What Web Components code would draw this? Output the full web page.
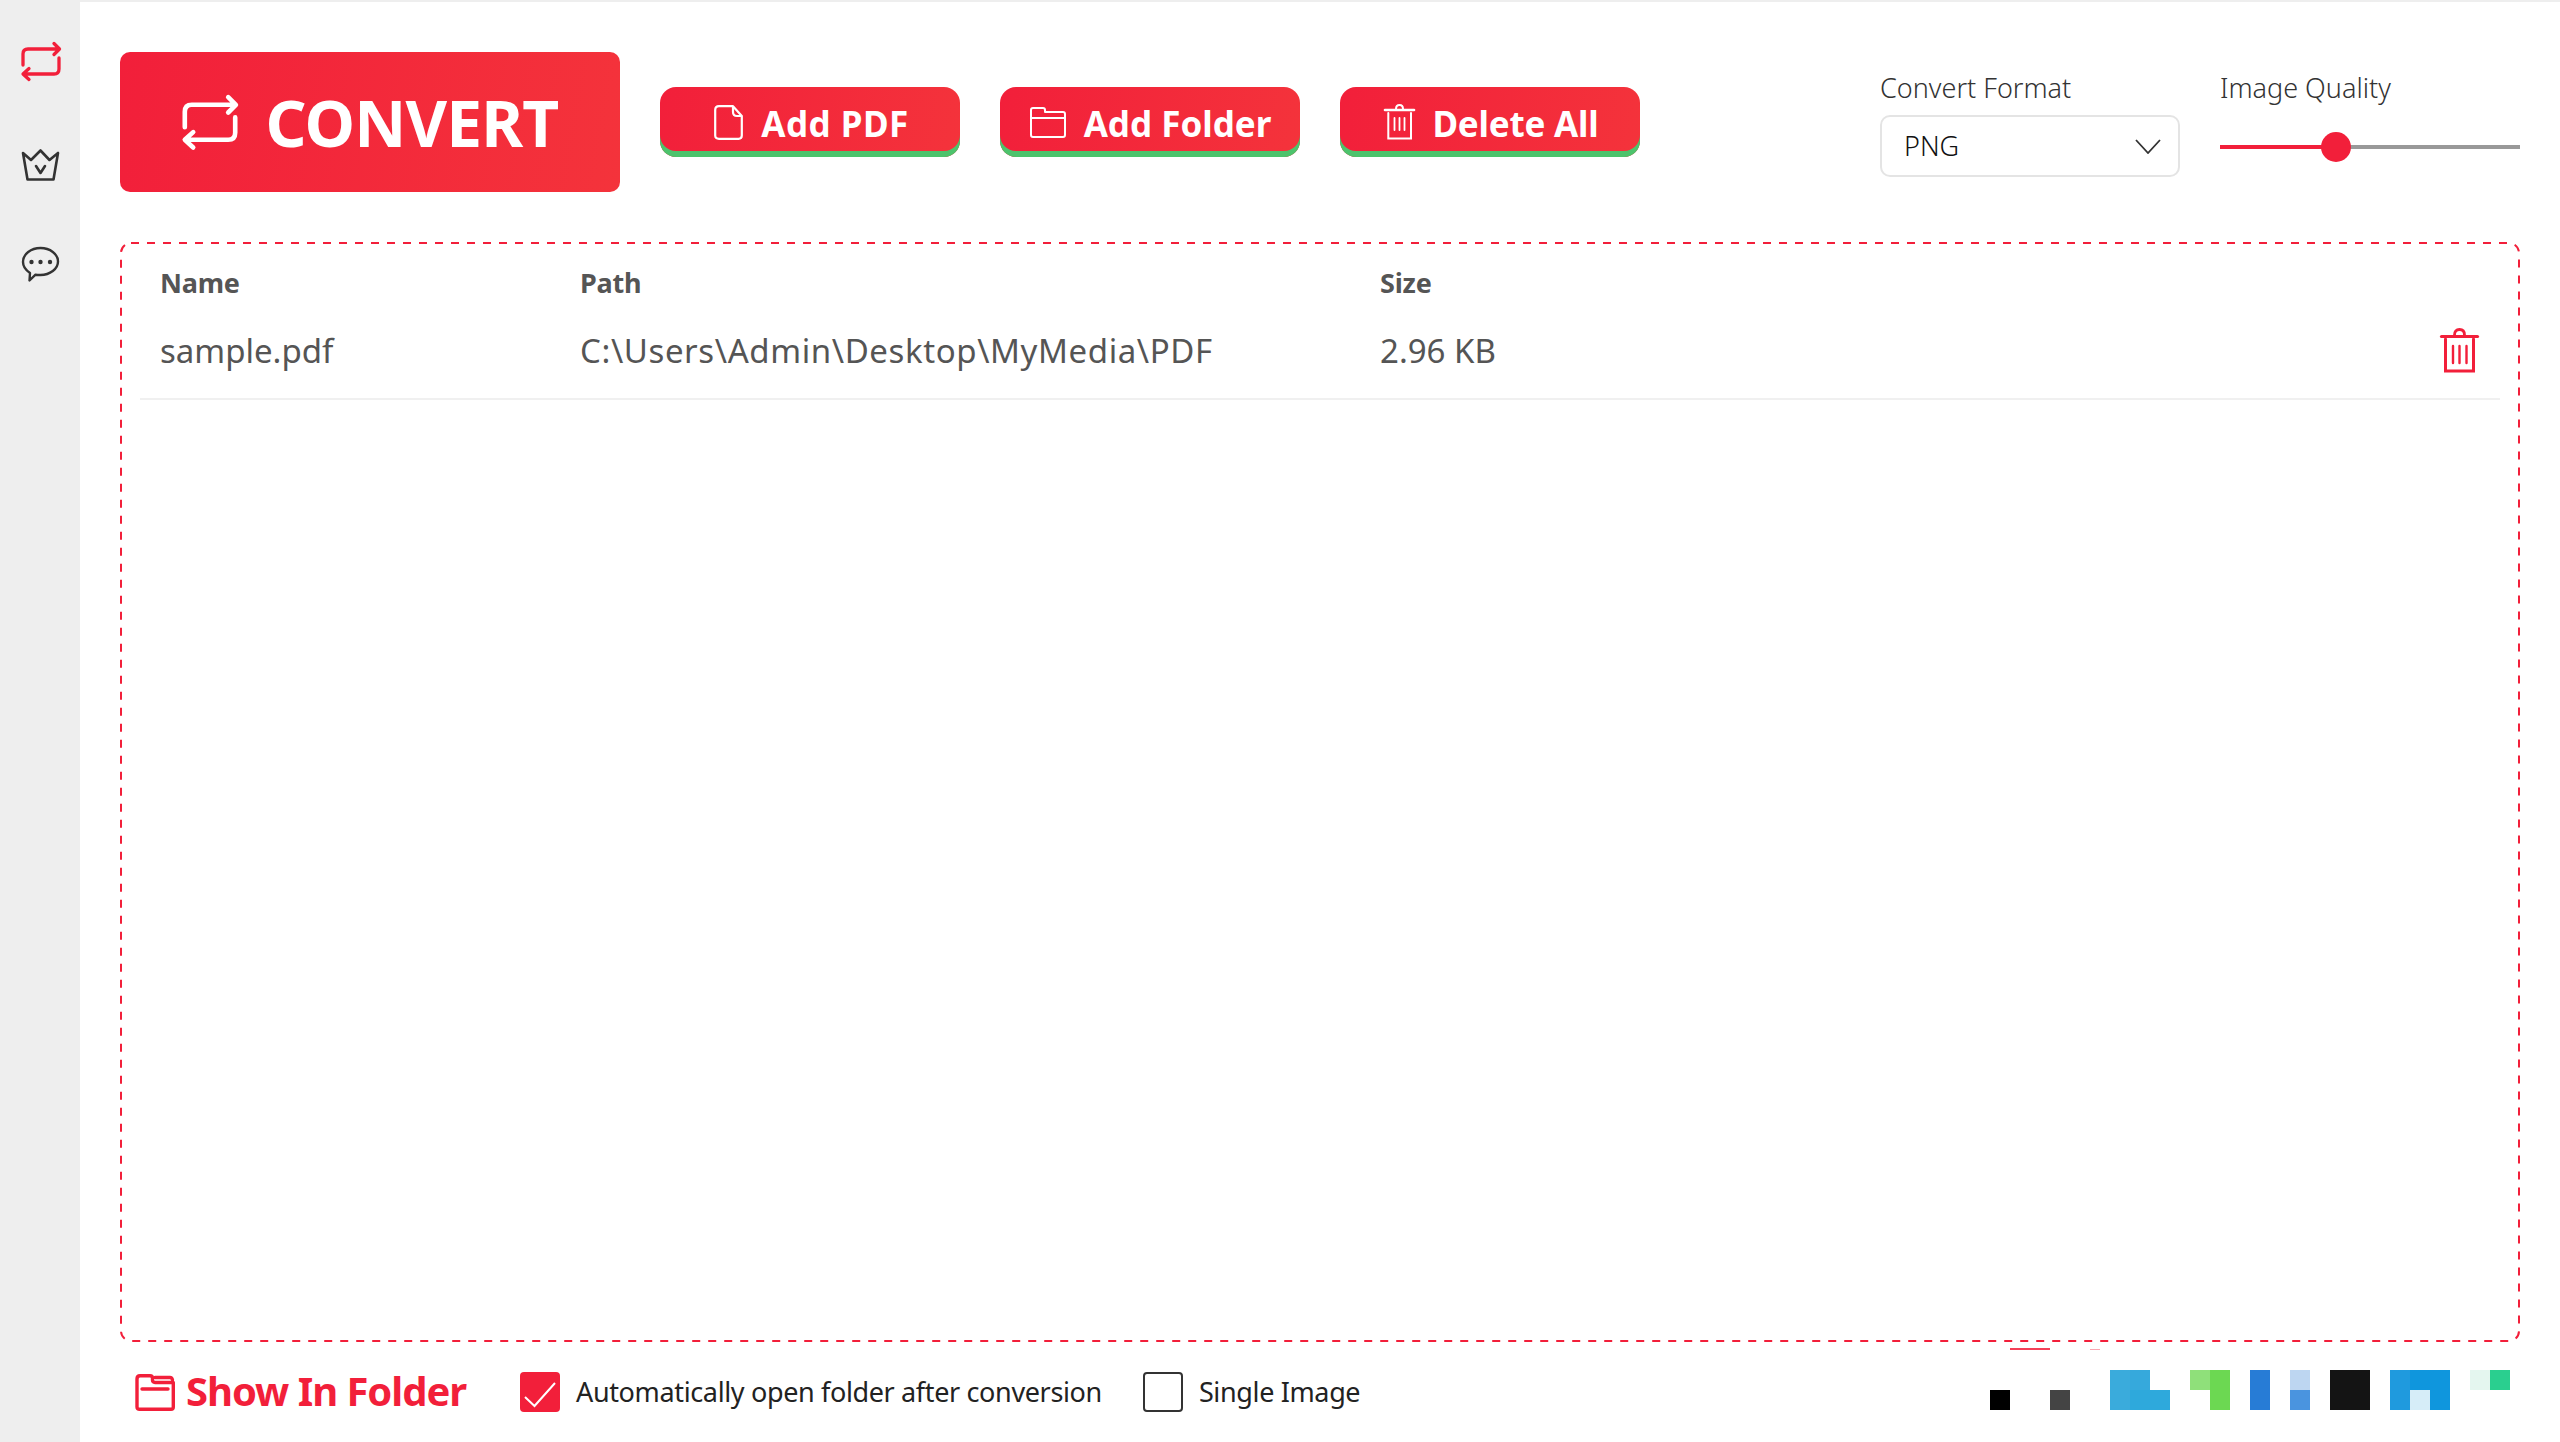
<!DOCTYPE html>
<html>
<head>
<meta charset="utf-8">
<title>Convert</title>
<style>
  html, body { margin: 0; padding: 0; height: 100%; background: #fff; }
  body { font-family: "Noto Sans", "Open Sans", sans-serif; }
</style>
</head>
<body>
<app-shell>
  <side-nav slot="nav">
    <app-icon name="repeat" size="40 40" color="#f21f3a"></app-icon>
    <app-icon name="crown" size="37 32" color="#333"></app-icon>
    <app-icon name="chat" size="37 35" color="#333"></app-icon>
  </side-nav>

  <tool-bar slot="top">
    <convert-button>CONVERT</convert-button>
    <tool-button style="letter-spacing:.5px"><app-icon slot="icon" name="file" size="29 35" color="#fff"></app-icon>Add PDF</tool-button>
    <tool-button style="padding-left:1px"><app-icon slot="icon" name="folder" size="36 31" color="#fff"></app-icon>Add Folder</tool-button>
    <tool-button style="letter-spacing:-.2px;gap:17px"><app-icon slot="icon" name="trash-thin" size="31 36" color="#fff"></app-icon>Delete All</tool-button>
    <format-select label="Convert Format" value="PNG"></format-select>
    <quality-slider label="Image Quality" percent="38.5"></quality-slider>
  </tool-bar>

  <drop-zone slot="body">
    <file-row header>
      <span slot="name">Name</span><span slot="path">Path</span><span slot="size">Size</span>
    </file-row>
    <file-row>
      <span slot="name">sample.pdf</span>
      <span slot="path" style="letter-spacing:.6px">C:\Users\Admin\Desktop\MyMedia\PDF</span>
      <span slot="size">2.96 KB</span>
      <app-icon slot="action" name="trash" size="39 45" color="#f21f3a"></app-icon>
    </file-row>
  </drop-zone>

  <foot-bar slot="bottom">
    <show-folder>Show In Folder</show-folder>
    <check-box checked>Automatically open folder after conversion</check-box>
    <check-box>Single Image</check-box>
    <pixel-strip></pixel-strip>
  </foot-bar>
</app-shell>

<script>
const RED = '#f21f3a'
const GRADIENT = 'linear-gradient(100deg, #f21f3a 0%, #f4333b 100%)'

const ICONS = {
  repeat: {
    box: '0 0 40 40',
    body: `<g fill="none" stroke="currentColor" stroke-width="3.300" stroke-linecap="round" stroke-linejoin="round">
      <path d="M2 23V12Q2 7 7 7H38M33 1.500L38.500 7L33 12.500"/>
      <path d="M38 16V27Q38 32 33 32H2.500M8 26.500L2 32L8 37.500"/></g>`,
  },
  crown: {
    box: '0 0 37 32',
    body: `<g fill="none" stroke="currentColor" stroke-width="2.600" stroke-linejoin="round" stroke-linecap="round">
      <path d="M1 4L9 11L18.500 1.500L27.500 11L36 4L31.500 30.500H5.500Z"/>
      <path d="M14 17L18.500 24L23 17"/></g>`,
  },
  chat: {
    box: '0 0 37 35',
    body: `<path d="M8 26C3.500 23 1 19 1 15C1 7 9 1 18.500 1C28 1 36 7 36 14.500C36 22 28 28 18.500 28C16.500 28 15 28 13.500 27.700L7.500 33.500Z" fill="none" stroke="currentColor" stroke-width="2.400" stroke-linejoin="round"/>
      <circle cx="9.500" cy="15" r="2.200" fill="currentColor"/><circle cx="18.500" cy="15" r="2.200" fill="currentColor"/><circle cx="28" cy="15" r="2.200" fill="currentColor"/>`,
  },
  file: {
    box: '0 0 29 35',
    body: `<g fill="none" stroke="currentColor" stroke-width="2.200" stroke-linejoin="round">
      <path d="M5 1.200H19L27.800 11V30.500Q27.800 33.800 24.500 33.800H5Q1.200 33.800 1.200 30.500V5Q1.200 1.200 5 1.200Z"/>
      <path d="M19 1.500V7Q19 11 23 11H27.500"/></g>`,
  },
  folder: {
    box: '0 0 36 31',
    body: `<g fill="none" stroke="currentColor" stroke-width="2" stroke-linejoin="round">
      <path d="M1 3Q1 1 3 1H13Q15 1 15 3V5H33Q35 5 35 7V28Q35 30 33 30H3Q1 30 1 28Z"/>
      <path d="M1 11H35"/></g>`,
  },
  'trash-thin': {
    box: '0 0 31 36',
    body: `<g fill="none" stroke="currentColor" stroke-linecap="round">
      <path d="M12 5Q12 1 15.500 1Q19 1 19 5" stroke-width="2"/>
      <path d="M1 6H30" stroke-width="2.600"/>
      <path d="M4.300 9V34.500H27V9" stroke-width="2"/>
      <path d="M10.500 14V26M15.500 14V26M20.500 14V26" stroke-width="1.800"/></g>`,
  },
  trash: {
    box: '0 0 39 45',
    body: `<g fill="none" stroke="currentColor" stroke-linecap="round">
      <path d="M14.500 7Q14.500 1.500 19.500 1.500Q24.500 1.500 24.500 7" stroke-width="2.800"/>
      <path d="M1.500 8.500H37.500" stroke-width="3.200"/>
      <path d="M5.500 11V43H33.500V11" stroke-width="3"/>
      <path d="M13 18V35M19.500 18V35M26.500 18V35" stroke-width="2.400"/></g>`,
  },
  'open-folder': {
    box: '0 0 40 37',
    body: `<g fill="none" stroke="currentColor" stroke-width="3.400" stroke-linejoin="round" stroke-linecap="round">
      <path d="M2 5Q2 1.700 5 1.700H15Q17.500 1.700 17.500 4V6Q17.500 8.500 20 8.500H38.300V33Q38.300 35.300 36 35.300H4.500Q2 35.300 2 33Z"/>
      <path d="M7 15H33M20 3.500H35Q37 3.500 37.500 6"/></g>`,
  },
}

class AppIcon extends HTMLElement {
  connectedCallback() {
    const [w, h] = (this.getAttribute('size') || '24 24').split(' ')
    const icon = ICONS[this.getAttribute('name')]
    const color = this.getAttribute('color') || 'currentColor'
    this.attachShadow({ mode: 'open' }).innerHTML = `
      <style>
        :host { display: block; flex: none; width: ${w}px; height: ${h}px; color: ${color}; }
        svg { display: block; width: 100%; height: 100%; overflow: visible; }
      </style>
      <svg viewBox="${icon.box}">${icon.body}</svg>`
  }
}

class AppShell extends HTMLElement {
  constructor() {
    super()
    this.attachShadow({ mode: 'open' }).innerHTML = `
      <style>
        :host { display: flex; height: 1442px; box-sizing: border-box; border-top: 2px solid #eee; overflow: hidden; }
        .main { flex: 1; min-width: 0; display: flex; flex-direction: column; padding: 0 40px; }
      </style>
      <slot name="nav"></slot>
      <div class="main">
        <slot name="top"></slot>
        <slot name="body"></slot>
        <slot name="bottom"></slot>
      </div>`
  }
}

class SideNav extends HTMLElement {
  constructor() {
    super()
    this.attachShadow({ mode: 'open' }).innerHTML = `
      <style>
        :host { display: flex; flex-direction: column; align-items: center; width: 80px; flex: none; box-sizing: border-box; padding: 40px 0 0 1px; gap: 66.500px; background: #eee; }
      </style>
      <slot></slot>`
  }
}

class ToolBar extends HTMLElement {
  constructor() {
    super()
    this.attachShadow({ mode: 'open' }).innerHTML = `
      <style>
        :host { display: flex; flex: none; height: 240px; box-sizing: border-box; padding-top: 50px; gap: 40px; align-items: flex-start; }
      </style>
      <slot></slot>`
  }
}

class ConvertButton extends HTMLElement {
  constructor() {
    super()
    this.attachShadow({ mode: 'open' }).innerHTML = `
      <style>
        :host { display: flex; align-items: center; justify-content: center; gap: 28px; width: 500px; height: 140px; padding-left: 2px; box-sizing: border-box; border-radius: 10px; background: ${GRADIENT}; color: #fff; font-weight: 700; font-size: 64px; letter-spacing: -.85px; }
        app-icon { margin-top: 1px; margin-left: -2px; }
      </style>
      <app-icon name="repeat" size="56 56" color="#fff"></app-icon>
      <span><slot></slot></span>`
  }
}

class ToolButton extends HTMLElement {
  constructor() {
    super()
    this.attachShadow({ mode: 'open' }).innerHTML = `
      <style>
        :host { display: flex; align-items: center; justify-content: center; gap: 18px; width: 300px; height: 70px; margin-top: 35px; padding-left: 3px; box-sizing: border-box; border-radius: 16px; background: ${GRADIENT}; box-shadow: inset 0 -6px 0 #4cc36c; color: #fff; font-weight: 700; font-size: 35px; }
        span { margin-top: 2px; }
      </style>
      <slot name="icon"></slot>
      <span><slot></slot></span>`
  }
}

class FormatSelect extends HTMLElement {
  connectedCallback() {
    this.attachShadow({ mode: 'open' }).innerHTML = `
      <style>
        :host { display: block; width: 300px; color: #333; font-size: 27px; font-weight: 300; }
        .label { height: 63px; line-height: 72px; }
        .box { display: flex; align-items: center; justify-content: space-between; height: 62px; box-sizing: border-box; padding: 0 17px 0 22px; border: 2px solid #e4e4e4; border-radius: 10px; color: #111; }
        .box span { margin-top: -2px; }
        svg { width: 26px; height: 15px; }
      </style>
      <div class="label">${this.getAttribute('label')}</div>
      <div class="box">
        <span>${this.getAttribute('value')}</span>
        <svg viewBox="0 0 26 15"><path d="M1 1L13 14L25 1" fill="none" stroke="#333" stroke-width="1.800"/></svg>
      </div>`
    this.style.marginLeft = 'auto'
  }
}

class QualitySlider extends HTMLElement {
  connectedCallback() {
    const pct = this.getAttribute('percent')
    this.attachShadow({ mode: 'open' }).innerHTML = `
      <style>
        :host { display: block; width: 300px; color: #333; font-size: 27px; font-weight: 300; }
        .label { height: 63px; line-height: 72px; }
        .rail { display: flex; align-items: center; height: 62px; margin-top: 1px; }
        .done { height: 4px; background: ${RED}; width: ${pct}%; }
        .knob { width: 30px; height: 30px; border-radius: 50%; background: ${RED}; flex: none; margin: 0 -15px; position: relative; }
        .rest { height: 4px; background: #999; flex: 1; }
      </style>
      <div class="label">${this.getAttribute('label')}</div>
      <div class="rail"><div class="done"></div><div class="knob"></div><div class="rest"></div></div>`
  }
}

class DropZone extends HTMLElement {
  constructor() {
    super()
    this.attachShadow({ mode: 'open' }).innerHTML = `
      <style>
        :host { display: block; position: relative; flex: 1; min-height: 0; box-sizing: border-box; padding: 2px 20px; }
        svg { position: absolute; inset: 0; width: 100%; height: 100%; pointer-events: none; }
        rect { x: 1px; y: 1px; width: calc(100% - 2px); height: calc(100% - 2px); rx: 10px; fill: none; stroke: ${RED}; stroke-width: 2; stroke-dasharray: 8 8; }
      </style>
      <svg><rect></rect></svg>
      <slot></slot>`
  }
}

class FileRow extends HTMLElement {
  constructor() {
    super()
    this.attachShadow({ mode: 'open' }).innerHTML = `
      <style>
        :host { display: grid; grid-template-columns: 420px 800px 1fr auto; align-items: center; box-sizing: border-box; height: 94px; padding: 0 21px 3px 20px; border-bottom: 2px solid #f0f0f0; color: #555; font-size: 33px; }
        :host([header]) { height: 62px; padding: 21px 21px 0 20px; border-bottom: 0; font-size: 27px; font-weight: 700; line-height: 36px; align-items: start; letter-spacing: -.2px; }
      </style>
      <slot name="name"></slot><slot name="path"></slot><slot name="size"></slot><slot name="action"></slot>`
  }
}

class FootBar extends HTMLElement {
  constructor() {
    super()
    this.attachShadow({ mode: 'open' }).innerHTML = `
      <style>
        :host { display: flex; flex: none; height: 100px; align-items: center; box-sizing: border-box; padding: 0 10px 0 15px; }
      </style>
      <slot></slot>`
  }
}

class ShowFolder extends HTMLElement {
  constructor() {
    super()
    this.attachShadow({ mode: 'open' }).innerHTML = `
      <style>
        :host { display: flex; align-items: center; gap: 11px; width: 385px; flex: none; color: ${RED}; font-weight: 700; font-size: 40px; letter-spacing: -1.050px; }
        span { margin-top: -3px; }
      </style>
      <app-icon name="open-folder" size="40 37" color="${RED}"></app-icon>
      <span><slot></slot></span>`
  }
}

class CheckBox extends HTMLElement {
  connectedCallback() {
    const on = this.hasAttribute('checked')
    this.attachShadow({ mode: 'open' }).innerHTML = `
      <style>
        :host { display: flex; align-items: center; gap: 16px; flex: none; margin-right: 41px; color: #222; font-size: 27px; letter-spacing: -.36px; }
        .box { width: 40px; height: 40px; box-sizing: border-box; border-radius: 4px; flex: none; }
        .on { background: ${RED}; }
        .off { border: 2px solid #333; }
        span { margin-top: -2px; }
        svg { display: block; width: 100%; height: 100%; }
      </style>
      <div class="box ${on ? 'on' : 'off'}">
        ${on ? '<svg viewBox="0 0 40 40"><path d="M5 25L14.500 34L35 11" fill="none" stroke="#fff" stroke-width="2"/></svg>' : ''}
      </div>
      <span><slot></slot></span>`
  }
}

// 底部那排彩色小块，一格 20px
class PixelStrip extends HTMLElement {
  constructor() {
    super()
    const cells = [
      [1, 2, 1, '#000'], [4, 2, 1, '#444'],
      [7, 1, 1, '#3aabdc'], [8, 1, 1, '#36a9dc'], [7, 2, 1, '#3aabdc'], [8, 2, 2, '#2ea9dc'],
      [11, 1, 1, '#8fe07a'], [12, 1, 1, '#6cd852'], [12, 2, 1, '#6cd852'],
      [14, 1, 1, '#277cd6'], [14, 2, 1, '#277cd6'],
      [16, 1, 1, '#bdd6f1'], [16, 2, 1, '#4a94df'],
      [18, 1, 2, '#141414'], [18, 2, 2, '#141414'],
      [21, 1, 1, '#1f9ade'], [22, 1, 2, '#0f96dd'], [21, 2, 1, '#1f9ade'], [22, 2, 1, '#d6edf8'], [23, 2, 1, '#0f96dd'],
      [25, 1, 1, '#e4f6ef'], [26, 1, 1, '#2acf8f'],
    ]
    const html = cells.map(([c, r, span, bg]) =>
      `<i style="grid-column:${c}/span ${span};grid-row:${r};background:${bg}"></i>`).join('')
    this.attachShadow({ mode: 'open' }).innerHTML = `
      <style>
        :host { display: grid; grid-template-columns: repeat(26, 20px); grid-template-rows: 20px 20px; margin-left: auto; margin-top: -4px; flex: none; position: relative; }
        .line { position: absolute; left: 20px; top: -22px; width: 40px; height: 2px; background: ${RED}; opacity: .85; }
        .tick { position: absolute; left: 100px; top: -21px; width: 10px; height: 1px; background: ${RED}; opacity: .4; }
      </style>
      ${html}
      <div class="line"></div><div class="tick"></div>`
  }
}

customElements.define('app-icon', AppIcon)
customElements.define('app-shell', AppShell)
customElements.define('side-nav', SideNav)
customElements.define('tool-bar', ToolBar)
customElements.define('convert-button', ConvertButton)
customElements.define('tool-button', ToolButton)
customElements.define('format-select', FormatSelect)
customElements.define('quality-slider', QualitySlider)
customElements.define('drop-zone', DropZone)
customElements.define('file-row', FileRow)
customElements.define('foot-bar', FootBar)
customElements.define('show-folder', ShowFolder)
customElements.define('check-box', CheckBox)
customElements.define('pixel-strip', PixelStrip)
</script>
</body>
</html>
